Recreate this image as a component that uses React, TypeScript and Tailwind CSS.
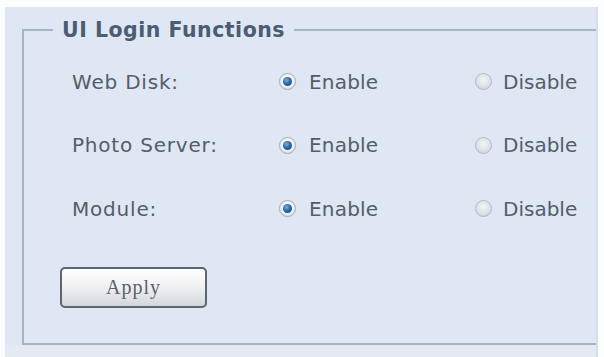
import React from "react";

const font = { fontFamily: '"DejaVu Sans", Verdana, sans-serif' };

function RadioOn() {
  return (
    <span className="relative flex h-[17px] w-[17px] items-center justify-center rounded-full border border-[#a9afb8] bg-[radial-gradient(circle_at_50%_40%,#ffffff_0%,#e9edf2_60%,#c5cbd4_100%)] shadow-[0_0_1px_#c0c6cf]">
      <span className="h-[9px] w-[9px] rounded-full bg-[radial-gradient(circle_at_40%_35%,#7fb0e0_0%,#2a6aa6_45%,#163d66_100%)]" />
    </span>
  );
}

function RadioOff() {
  return (
    <span className="flex h-[17px] w-[17px] items-center justify-center rounded-full border border-[#b5bac2] bg-[radial-gradient(circle_at_50%_40%,#f4f5f6_0%,#dcdfe3_60%,#c3c8cf_100%)]" />
  );
}

function Row({ label }: { label: string }) {
  return (
    <div className="flex h-[63.5px] items-center text-[20px] text-[#555d69]" style={font}>
      <div className="w-[207px] tracking-[0.8px]">{label}</div>
      <div className="flex w-[196px] items-center">
        <RadioOn />
        <span className="ml-[13px] tracking-[0.2px]">Enable</span>
      </div>
      <div className="flex items-center">
        <RadioOff />
        <span className="ml-[11px]">Disable</span>
      </div>
    </div>
  );
}

export default function App() {
  return (
    <div className="h-[357px] w-[604px] overflow-hidden bg-[#fcfdfe] pl-[5px] pt-[7px]">
      <div className="flex h-[350px] w-[593px] flex-col overflow-hidden border-r-2 border-[#d6deea] bg-[#dee7f3]">
        <div className="pl-[17px] pt-[11px]">
          <fieldset className="w-[600px] border-2 border-[#aab3c0] pb-[35px]">
            <legend
              className="ml-[29px] px-[9px] text-[20.5px] font-bold leading-[24px] tracking-[0.5px] text-[#4a5d72]"
              style={font}
            >
              UI Login Functions
            </legend>
            <div className="pl-[48px] pt-[8px]">
              <Row label="Web Disk:" />
              <Row label="Photo Server:" />
              <Row label="Module:" />
            </div>
            <div className="ml-[36px] mt-[26px] flex h-[41px] w-[147px] items-center justify-center rounded-[5px] border-2 border-[#5d6572] bg-[linear-gradient(#ffffff_0%,#f1f2f4_45%,#d3d6dc_100%)] shadow-[inset_0_1px_0_#ffffff]">
              <span
                className="text-[20px] tracking-[1px] text-[#5b616a]"
                style={{ fontFamily: '"Liberation Serif", "Times New Roman", serif' }}
              >
                Apply
              </span>
            </div>
          </fieldset>
        </div>
        <div className="flex-1 bg-[#e5e9f2]" />
      </div>
    </div>
  );
}
